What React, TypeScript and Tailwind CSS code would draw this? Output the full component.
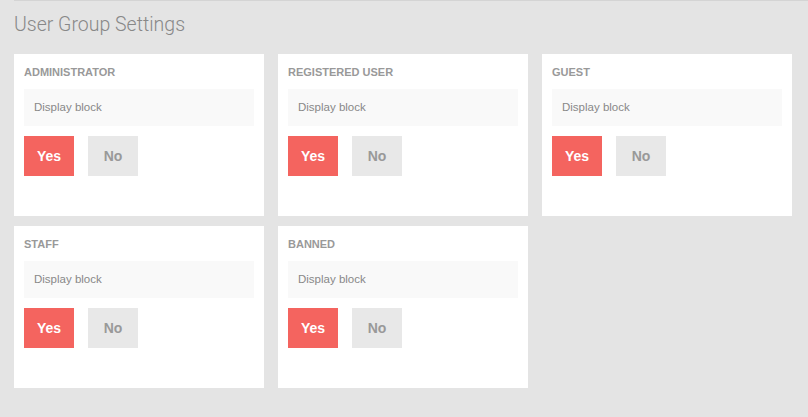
const groups = ["Administrator", "Registered User", "Guest", "Staff", "Banned"];

const GroupCard = ({ name }: { name: string }) => (
  <div className="h-[162px] bg-white px-[10px] pt-[11px]">
    <h2 className="font-bold text-[11px] text-[#999] uppercase leading-[14px]">
      {name}
    </h2>
    <div className="mt-[10px] flex h-[37px] items-center bg-[#f9f9f9] px-[10px] text-[#888] text-[11.5px]">
      Display block
    </div>
    <div className="mt-[10px] flex gap-[14px]">
      <button
        className="h-[40px] w-[50px] bg-[#f4645f] font-bold text-[14px] text-white"
        type="button"
      >
        Yes
      </button>
      <button
        className="h-[40px] w-[50px] bg-[#e8e8e8] font-bold text-[#999] text-[14px]"
        type="button"
      >
        No
      </button>
    </div>
  </div>
);

export default function App() {
  return (
    <div className="min-h-screen bg-[#e4e4e4] font-['Liberation_Sans',Arial,sans-serif]">
      <div className="ml-[14px] border-[#d4d4d4] border-t" />
      <h1 className="px-[14px] pt-[12px] font-['Roboto',sans-serif] font-light text-[#888] text-[19.5px] leading-[24px]">
        User Group Settings
      </h1>
      <div className="mt-[17px] grid grid-cols-[repeat(3,250px)] gap-x-[14px] gap-y-[10px] px-[14px]">
        {groups.map((g) => (
          <GroupCard key={g} name={g} />
        ))}
      </div>
    </div>
  );
}
